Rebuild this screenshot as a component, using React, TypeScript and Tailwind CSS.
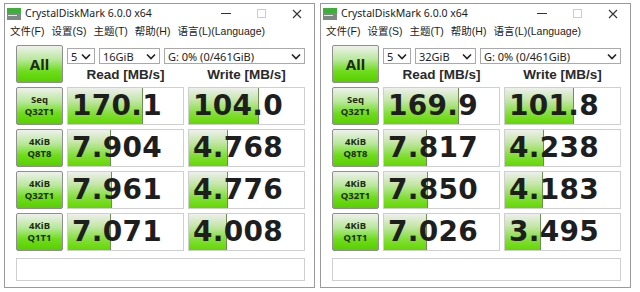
import React from "react";

type Row = {
  top: string;
  bottom: string;
  read: string;
  readFill: number;
  write: string;
  writeFill: number;
};

type WindowProps = {
  size: string;
  rows: Row[];
};

const leftRows: Row[] = [
  { top: "Seq", bottom: "Q32T1", read: "170.1", readFill: 75, write: "104.0", writeFill: 70 },
  { top: "4KiB", bottom: "Q8T8", read: "7.904", readFill: 43, write: "4.768", writeFill: 39 },
  { top: "4KiB", bottom: "Q32T1", read: "7.961", readFill: 44, write: "4.776", writeFill: 39 },
  { top: "4KiB", bottom: "Q1T1", read: "7.071", readFill: 43, write: "4.008", writeFill: 38 },
];

const rightRows: Row[] = [
  { top: "Seq", bottom: "Q32T1", read: "169.9", readFill: 75, write: "101.8", writeFill: 69 },
  { top: "4KiB", bottom: "Q8T8", read: "7.817", readFill: 43, write: "4.238", writeFill: 39 },
  { top: "4KiB", bottom: "Q32T1", read: "7.850", readFill: 44, write: "4.183", writeFill: 38 },
  { top: "4KiB", bottom: "Q1T1", read: "7.026", readFill: 43, write: "3.495", writeFill: 36 },
];

const menus = ["文件(F)", "设置(S)", "主题(T)", "帮助(H)", "语言(L)(Language)"];

function Chevron() {
  return (
    <svg width="10" height="7" viewBox="0 0 10 7" className="shrink-0">
      <path d="M1 1.5 L5 5.5 L9 1.5" fill="none" stroke="#222" strokeWidth="1.6" />
    </svg>
  );
}

function Select({ value, width }: { value: string; width: string }) {
  return (
    <div
      className={`flex h-[16px] ${width} items-center justify-between border border-[#a9a9a9] bg-white pl-[3px] pr-[3px] text-[11px] leading-none text-[#222]`}
    >
      <span>{value}</span>
      <Chevron />
    </div>
  );
}

function GreenButton({ children }: { children: React.ReactNode }) {
  return (
    <div className="flex h-[38px] w-[47px] shrink-0 flex-col items-center justify-center rounded-[2px] border border-[#8f8f8f] bg-[linear-gradient(to_bottom,#eef1ec_0%,#b9e89a_38%,#6edc1c_70%,#58d000_100%)] text-center font-bold text-[#1d2b12]">
      {children}
    </div>
  );
}

function Cell({ value, fill }: { value: string; fill: number }) {
  return (
    <div className="relative h-[38px] w-[117px] border border-[#cfcfcf] bg-white">
      <div
        className="absolute bottom-0 left-0 top-0 border-r border-[#6d8f55] bg-[linear-gradient(to_bottom,#eef0ec_0%,#c3e6a6_35%,#84de3c_70%,#63d800_100%)]"
        style={{ width: fill }}
      />
      <div className="relative flex h-full items-center pl-[4px] font-['DejaVu_Sans',sans-serif] text-[28px] font-bold leading-none tracking-[0.3px] text-[#1e1e1e]">
        {value}
      </div>
    </div>
  );
}

function Window({ size, rows }: WindowProps) {
  return (
    <div className="flex h-[285px] w-[311px] flex-col border border-[#9a9a9a] bg-white">
      {/* title bar */}
      <div className="flex h-[19px] items-center pl-[2px] pr-[12px]">
        <svg width="14" height="12" viewBox="0 0 14 12" className="mr-[4px]">
          <rect x="0" y="0" width="14" height="5" fill="#3fae3a" />
          <rect x="0" y="5" width="14" height="7" fill="#7d8a84" />
          <rect x="1" y="7" width="9" height="1" fill="#e6e6e6" />
        </svg>
        <span className="font-['Noto_Sans',sans-serif] text-[10.5px] text-[#1b1b1b]">
          CrystalDiskMark 6.0.0 x64
        </span>
        <div className="ml-auto flex items-center gap-[26px]">
          <div className="h-[1px] w-[10px] bg-[#333]" />
          <div className="h-[9px] w-[9px] border border-[#cdcdcd]" />
          <svg width="10" height="10" viewBox="0 0 10 10">
            <path d="M1 1 L9 9 M9 1 L1 9" stroke="#333" strokeWidth="1.1" />
          </svg>
        </div>
      </div>
      {/* menu */}
      <div className="flex h-[18px] items-center gap-[7px] pl-[5px] font-['Liberation_Sans','Noto_Sans_CJK_SC',sans-serif] text-[10.5px] text-[#1b1b1b]">
        {menus.map((m) => (
          <span key={m}>{m}</span>
        ))}
      </div>
      {/* content */}
      <div className="flex flex-col gap-[4px] pl-[11px] pt-[4px] font-['Noto_Sans',sans-serif]">
        <div className="flex h-[38px] gap-[4px]">
          <GreenButton>
            <span className="text-[15px] leading-none">All</span>
          </GreenButton>
          <div className="flex flex-col">
            <div className="mt-[3px] flex gap-[4px]">
              <Select value="5" width="w-[28px]" />
              <Select value={size} width="w-[61px]" />
              <Select value="G: 0% (0/461GiB)" width="w-[141px]" />
            </div>
            <div className="flex gap-[4px] pt-[3px] font-['Liberation_Sans',sans-serif] text-[13.5px] font-bold leading-[16px] text-[#2a2a2a]">
              <div className="w-[117px] text-center">Read [MB/s]</div>
              <div className="w-[117px] text-center">Write [MB/s]</div>
            </div>
          </div>
        </div>
        {rows.map((r, i) => (
          <div key={i} className="flex gap-[4px]">
            <GreenButton>
              <span className="text-[9.5px] leading-[12px]">{r.top}</span>
              <span className="text-[9.5px] leading-[12px]">{r.bottom}</span>
            </GreenButton>
            <Cell value={r.read} fill={r.readFill} />
            <Cell value={r.write} fill={r.writeFill} />
          </div>
        ))}
        <div className="mt-[3px] h-[23px] w-[289px] border border-[#cfcfcf] bg-white" />
      </div>
    </div>
  );
}

export default function App() {
  return (
    <div className="flex h-[292px] w-[640px] gap-[5px] bg-white pl-[4px] pt-[3px]">
      <Window size="16GiB" rows={leftRows} />
      <Window size="32GiB" rows={rightRows} />
    </div>
  );
}
